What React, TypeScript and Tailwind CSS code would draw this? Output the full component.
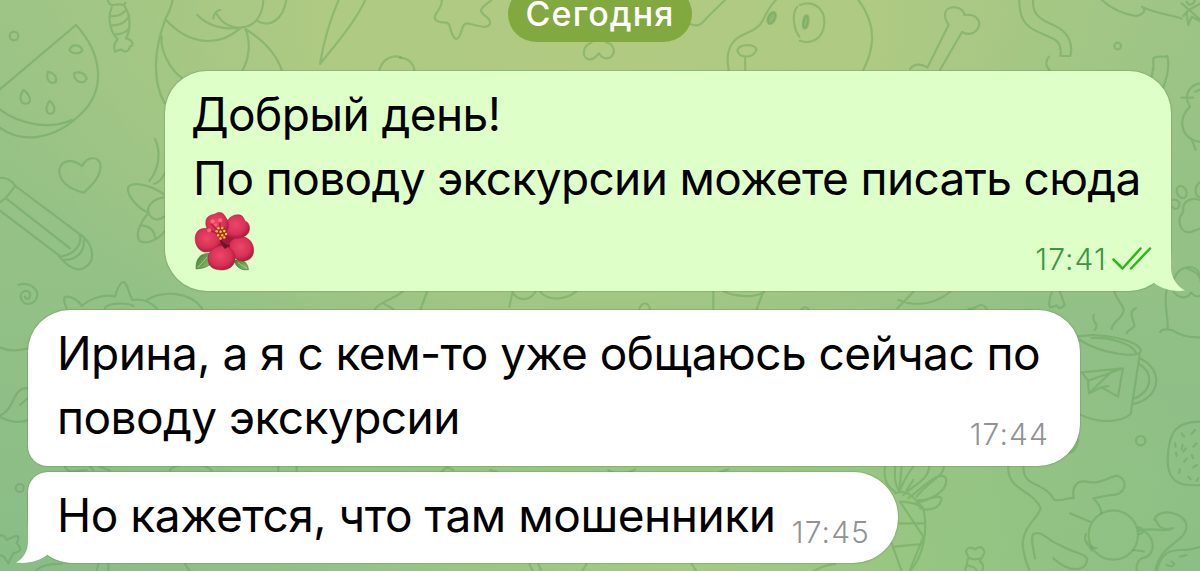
import type { ReactNode } from "react";

function Doodles({ x, y, children }: { x: number; y: number; children: ReactNode }) {
  return <g transform={`translate(${x} ${y}) scale(0.33333)`}>{children}</g>;
}

function Wallpaper() {
  return (
    <svg
      className="absolute inset-0 h-full w-full"
      viewBox="0 0 1200 571"
      fill="none"
      stroke="#5f9a55"
      strokeOpacity="0.4"
      strokeWidth="6.5"
      strokeLinecap="round"
      strokeLinejoin="round"
      aria-hidden="true"
    >
      <Doodles x={0} y={0}>
        <circle cx="42" cy="108" r="13" />
        <path d="M-5 272L228 75C310 165 316 270 245 340C160 425 60 430 -5 380M-5 325C60 375 150 390 215 360" />
        <path d="M208 150C215 130 240 133 247 150C240 165 215 161 208 150ZM144 215C160 218 172 230 168 245C155 255 135 243 144 215ZM222 220C240 213 257 220 260 237C250 255 222 247 222 220ZM70 270C85 278 95 298 87 308C65 318 52 298 70 270ZM149 302C160 312 168 325 160 338C143 350 130 330 149 302Z" />
        <path d="M323 0C330 20 335 15 349 14C365 10 375 20 376 8M335 22C322 55 330 95 353 118C340 130 342 145 345 155C358 150 364 145 371 153C380 157 388 150 390 140C403 138 400 120 378 115C395 85 390 40 373 18M333 48C350 50 365 45 378 30M332 76C355 78 375 70 388 48M345 104C365 102 382 96 388 82" />
        <path d="M519 -5C510 40 500 45 496 58C465 140 453 235 494 310M496 58C570 140 660 140 724 82C775 80 790 30 790 -5M724 82C705 85 670 78 650 42M640 55C642 40 650 32 660 30M592 45C620 75 670 92 724 82M770 62C810 85 850 60 860 -5M736 87C755 130 745 180 728 210M736 87C790 120 830 165 845 210M485 110C480 150 510 210 546 234" />
        <path d="M1018 -5C985 70 970 130 960 192C1010 130 1070 60 1098 -5M1138 210C1150 170 1185 165 1202 172" />
        <path d="M246 498C265 465 300 468 302 500C300 535 270 560 252 578C205 568 175 540 178 508C186 478 220 476 246 498Z" />
        <path d="M-5 535C15 530 35 540 46 558L236 700C250 715 238 760 182 770L-5 628M46 558C30 575 20 600 -5 608M18 595L210 745M236 700C290 735 290 800 235 809C210 805 190 785 178 770M251 720C255 755 230 780 190 780" />
        <path d="M465 417C485 460 475 510 448 543M494 520C485 540 475 548 462 552M490 582C460 560 400 540 384 562C380 590 420 630 446 638C425 660 405 700 417 720C430 735 470 725 493 695M446 638C455 665 480 660 492 650M490 592C450 600 440 625 446 638M420 676C445 675 465 690 465 715" />
        <path d="M56 855C80 845 112 860 112 885C108 920 64 920 62 890C64 865 95 870 90 888C88 900 76 898 75 890" />
        <path d="M200 925C190 905 190 890 200 890C220 890 238 905 245 918C270 895 315 880 345 890C355 855 363 845 372 846C385 855 388 890 398 900C430 895 450 905 470 925M440 900C490 870 570 875 606 925M315 925C320 910 380 905 400 918" />
      </Doodles>
      <Doodles x={400} y={0}>
        <path d="M125 0C130 25 95 45 106 58C120 75 140 60 148 75C153 95 158 115 170 117C188 112 180 70 202 70C230 75 260 90 270 72C275 50 240 45 243 30C250 15 270 5 275 0" />
        <path d="M0 173C25 175 40 190 43 210M575 127C545 140 545 175 568 178C585 180 590 165 597 160C606 175 620 178 632 172C650 155 640 130 618 127M870 72C900 85 910 65 922 52L980 -5" />
        <path d="M1132 -5C1120 10 1110 15 1090 58C1070 100 1030 95 1005 120C980 145 980 180 986 210M1012 152C1015 130 1070 130 1069 150C1060 175 1020 177 1012 152ZM1035 172L1036 210M1192 20C1175 40 1180 85 1198 110" />
        <ellipse cx="1115" cy="54" rx="11" ry="19" transform="rotate(25 1115 54)" fill="#5f9a55" fillOpacity=".4" />
      </Doodles>
      <Doodles x={800} y={0}>
        <path d="M0 15C40 0 75 25 73 70C70 115 35 135 0 122M175 0C240 85 215 160 190 210" />
        <ellipse cx="17" cy="66" rx="8" ry="20" transform="rotate(10 17 66)" fill="#5f9a55" fillOpacity=".4" />
        <path d="M330 208C340 190 365 190 382 203L446 74C425 45 435 20 466 22C485 25 492 35 493 45C530 40 545 65 534 85C520 105 500 105 486 96L420 210" />
        <path d="M658 -5C655 90 710 90 757 115C780 125 785 145 781 168L811 168C820 130 805 95 760 75C710 55 695 35 700 -5M747 170C735 185 738 200 748 210" />
        <path d="M900 -5C930 25 970 42 1008 48C1030 45 1040 30 1026 20C1060 40 1120 45 1145 56M1145 10L1202 60M1150 48C1170 20 1190 20 1202 10M1160 40L1165 75L1175 50L1202 64M1160 5C1165 20 1180 15 1185 0" />
        <circle cx="953" cy="138" r="10" />
        <path d="M1060 210V175C1075 163 1090 175 1102 168C1110 200 1100 235 1090 262M1055 230L1060 200M1202 250C1165 255 1150 290 1170 320C1135 350 1135 415 1202 426M1145 293H1180M1175 418L1187 450M1185 275L1202 268" />
        <ellipse cx="1145" cy="576" rx="14" ry="19" transform="rotate(-25 1145 576)" />
        <path d="M1118 600C1135 595 1145 613 1133 624C1125 630 1119 625 1118 620M1202 545C1180 560 1184 590 1202 592M1202 600C1170 590 1145 605 1150 635C1125 665 1145 705 1175 695L1202 685" />
        <path d="M1120 840C1140 790 1190 790 1202 830M1160 805C1185 815 1202 825 1202 845M1175 880C1190 895 1205 890 1210 875" />
      </Doodles>
      <Doodles x={900} y={280}>
        <path d="M40 36L-8 85M150 36C100 75 45 80 -5 60M205 87C235 88 240 60 260 86M455 38C445 60 448 78 450 82C465 80 470 70 476 84C485 85 490 80 494 75L480 36" />
        <path d="M643 30C645 60 680 80 668 100C660 120 638 125 635 147M582 105C570 125 602 130 584 150M708 85C680 95 705 125 703 138C695 150 680 150 680 160M800 30C790 70 805 110 803 146M780 157C785 145 800 148 815 150C850 170 870 173 902 172M820 35C840 60 865 55 872 38" />
        <path d="M530 170C600 155 710 180 723 210C725 240 600 220 540 180M575 174C640 172 700 195 708 220M719 225L692 402C660 430 590 430 540 403M722 236C785 265 790 350 700 372M716 252C760 275 760 330 705 355M545 277L669 265L654 350L604 322L567 340L564 302L669 265M564 302L547 279M567 340L640 270M604 322L625 318" />
        <circle cx="722" cy="482" r="14" />
        <path d="M535 480C530 505 520 520 500 520M902 425C830 425 805 450 803 545C805 600 830 620 902 615M845 460L852 470M885 450L875 462M825 490L827 500M890 490L880 500M848 495L845 508M858 505L850 515M828 518L830 528M875 525L880 535M860 535L853 545M890 555L880 562M840 568L838 578M865 590L872 598M895 595L890 602" />
        <path d="M325 560C320 630 400 630 422 685C410 720 370 740 368 790C370 830 380 850 390 875M370 560C370 625 430 600 463 660C490 665 505 650 521 655C515 620 530 600 560 605C600 615 625 590 652 587C690 600 675 650 630 645L580 655C595 670 605 685 603 700M510 700L570 725" />
        <circle cx="640" cy="765" r="74" />
        <path d="M558 762C550 780 560 805 590 804M560 785L575 812M405 835C400 800 390 775 400 762C430 750 445 785 480 795C520 820 560 820 562 840C555 875 510 880 460 835M714 742C730 745 740 755 717 763M717 752C775 740 790 760 820 745M700 810L732 814M720 745C775 775 765 830 725 835C710 845 708 860 710 875M763 720C770 685 855 690 860 740C855 790 780 790 765 875M768 720C775 745 795 750 815 745M902 800C850 820 830 800 800 820C780 835 775 855 770 875M800 855C820 865 830 850 815 845M840 830L860 825" />
      </Doodles>
      <Doodles x={860} y={460}>
        <path d="M75 20C70 55 80 80 105 95M118 95C100 65 105 40 105 20M125 20L118 95C130 65 140 45 160 20M208 20C205 60 160 75 130 105M140 90L160 60M252 20C250 50 210 60 170 110M145 115C180 90 240 25 258 55C265 95 210 120 168 128M175 120C200 125 235 100 245 115C240 145 210 155 180 145M105 100C140 85 160 110 190 145M120 125C145 125 170 130 190 145C205 210 190 290 150 333M120 125L190 230L182 250L150 330M118 190H190M105 260L185 252M95 250L125 333" />
        <path d="M325 290C310 270 325 255 345 268C365 250 380 275 370 285C365 295 360 300 360 305C375 315 370 325 365 333M325 290L320 315L315 333M330 295C340 300 350 298 358 296M320 315C340 320 350 325 350 333" />
      </Doodles>
      <Doodles x={200} y={285}>
        <path d="M525 72C540 50 585 40 608 20M550 55L580 72M682 18L662 72M928 65L938 20C950 50 990 50 1008 18M1020 20C1045 50 1100 45 1130 18M1318 72C1325 50 1345 50 1350 72M1540 18V72M1570 18C1600 35 1660 40 1692 22M1690 20L1670 72M1805 72C1810 65 1820 65 1825 72" />
      </Doodles>
      <Doodles x={0} y={280}>
        <path d="M-5 200C25 215 45 213 85 205M85 325C55 320 45 350 35 370C25 390 10 405 -5 407C30 430 65 428 85 420M60 375L82 355" />
        <circle cx="59" cy="624" r="12" />
        <path d="M-5 770C10 760 15 770 20 780L40 770C55 765 60 770 50 790C65 805 65 815 40 820L25 850L10 828L-5 825M105 875C120 855 160 850 185 852M325 852V875M290 875L295 852M555 852L570 875M195 560C205 585 230 570 260 570M280 570L270 560M300 560L330 572M510 572C520 545 620 545 635 572M835 560V572M890 560V572" />
      </Doodles>
      <Doodles x={400} y={440}>
        <path d="M125 96L140 80L160 90M270 90L290 96M625 90C640 104 690 100 705 88M960 96L985 88M388 372L400 395M415 372L425 395M545 395L560 372M875 372L890 395M1240 395C1260 380 1280 375 1305 372" />
      </Doodles>
    </svg>
  );
}

function Hibiscus() {
  return (
    <svg className="mt-px ml-px block h-[60px] w-[62px]" viewBox="45 35 180 174" role="img" aria-label="🌺">
      <defs>
        <radialGradient id="petal" cx="45%" cy="42%" r="62%">
          <stop offset="0" stopColor="#ea4869" />
          <stop offset=".65" stopColor="#d83055" />
          <stop offset="1" stopColor="#a5193a" />
        </radialGradient>
        <linearGradient id="leaf" x1="0" y1="0" x2="1" y2="1">
          <stop offset="0" stopColor="#3f7c32" />
          <stop offset="1" stopColor="#8fc36a" />
        </linearGradient>
      </defs>
      <g fill="url(#leaf)" stroke="#3f7533" strokeWidth="2">
        <path d="M51 203C50 175 62 158 89 158L92 190C78 200 65 202 51 203Z" />
        <path d="M162 180C175 170 200 178 203 205C185 208 168 200 162 180Z" />
        <path d="M55 200L84 168M172 184L199 202" fill="none" stroke="#b0d892" />
      </g>
      <path d="M100 90L150 85L175 120L165 170L110 160L90 120Z" fill="#a3193a" />
      <g fill="url(#petal)" stroke="#a91d3e" strokeWidth="1.5">
        <path d="M148 128C170 95 215 108 218 145C220 170 202 182 183 180C160 175 146 155 148 128Z" />
        <path d="M132 95C133 62 155 43 176 46C187 47 191 58 193 64C210 70 210 95 197 105C178 118 148 118 132 95Z" />
        <path d="M112 102C85 98 76 80 80 62C84 46 98 47 107 43C120 34 132 41 137 53C152 75 145 96 126 105Z" />
        <path d="M117 105C96 81 65 80 54 96C42 112 49 148 75 154C104 156 121 137 125 116Z" />
        <path d="M125 135C97 140 81 158 87 184C91 202 111 207 130 206C153 204 168 187 164 165C160 148 145 135 125 135Z" />
      </g>
      <path d="M120 111C128 125 130 130 150 134L135 145C126 136 120 124 120 111Z" fill="#6d1429" />
      <path d="M125 105L94 72M119 100L121 62M118 103L90 91" stroke="#bb193f" strokeWidth="4" />
      <g fill="#ff6a77">
        <circle cx="99" cy="65" r="6" />
        <circle cx="121" cy="62" r="6" />
        <circle cx="89" cy="91" r="6" />
        <circle cx="108" cy="75" r="4" />
      </g>
      <path d="M111 84L134 82L139 106L123 118L108 103Z" fill="#a33224" />
      <g fill="#f8c63d">
        <circle cx="116" cy="85" r="3.6" />
        <circle cx="127" cy="84" r="3.6" />
        <circle cx="111" cy="94" r="3.6" />
        <circle cx="122" cy="95" r="3.6" />
        <circle cx="133" cy="93" r="3.6" />
        <circle cx="138" cy="102" r="3.6" />
        <circle cx="115" cy="105" r="3.6" />
        <circle cx="127" cy="105" r="3.6" />
        <circle cx="122" cy="115" r="3.6" />
        <circle cx="133" cy="112" r="3.6" />
      </g>
    </svg>
  );
}

function Checks() {
  return (
    <svg className="h-6 w-10" viewBox="0 0 40 24" fill="none" stroke="#2fb51d" strokeWidth="2.5" strokeLinecap="round" strokeLinejoin="round">
      <path d="M1.5 12.5L10.5 21.5L28.5 1.5M19 21.5L38 1.5" />
    </svg>
  );
}

function Time({ children }: { children: string }) {
  return <span className="text-[30px] leading-[36px] font-[350] tracking-[1.1px] whitespace-nowrap">{children}</span>;
}

export default function App() {
  return (
    <main
      lang="ru"
      className="relative h-[571px] w-[1200px] overflow-hidden bg-[#94c385] bg-[radial-gradient(ellipse_620px_400px_at_600px_20px,#b1ca82_0%,#aeca83_45%,transparent_100%),radial-gradient(ellipse_600px_300px_at_680px_571px,#a0cc80_0%,transparent_100%),linear-gradient(180deg,#9cc486_0%,#94c186_45%,#89bd86_100%)] font-['Inter','Liberation_Sans',sans-serif] text-black"
    >
      <Wallpaper />
      <div className="relative flex flex-col">
        <div className="-mt-[14px] flex h-[56px] w-[184px] items-center justify-center self-center rounded-full bg-[#82a93f]">
          <span className="-mt-px text-[34px] leading-[40px] font-medium tracking-[1.1px] text-white">Сегодня</span>
        </div>

        <section className="relative mt-[29px] ml-[165px] flex h-[220px] w-[1006px] flex-col rounded-[42px] bg-[#dfffc9] pt-[11px] pl-[28px] shadow-[0_0_1px_1px_rgba(70,110,50,0.22)]">
          <p className="text-[46px] leading-[64px] whitespace-nowrap">
            <span className="-ml-[2px] block tracking-[-0.6px]">Добрый день!</span>
            <span className="block tracking-[-0.64px]">По поводу экскурсии можете писать сюда</span>
          </p>
          <div className="flex justify-between pr-[19px]">
            <Hibiscus />
            <div className="mt-[31px] flex h-9 items-center gap-[5px] text-[#399746]">
              <Time>17:41</Time>
              <Checks />
            </div>
          </div>
          <svg className="absolute -right-[14px] bottom-0 h-[42px] w-[46px]" viewBox="0 0 46 42">
            <path d="M15 34C23 40 34 43 46 41.5C38 37 33 30 32 20V0L8 20Z" fill="#dfffc9" />
          </svg>
        </section>

        <section className="mt-[19px] ml-[28px] flex h-[156px] w-[1052px] justify-between rounded-[42px] rounded-bl-[20px] bg-white pt-[11px] pr-[31px] pl-[29px] shadow-[0_0_1px_1px_rgba(70,110,50,0.22)]">
          <p className="text-[46px] leading-[64px] whitespace-nowrap">
            <span className="block tracking-[-0.55px]">Ирина, а я с кем-то уже общаюсь сейчас по</span>
            <span className="block tracking-[-0.55px]">поводу экскурсии</span>
          </p>
          <div className="-ml-[90px] flex items-end pb-[14px] text-[#929295]">
            <Time>17:44</Time>
          </div>
        </section>

        <section className="relative mt-[6px] ml-[28px] flex h-[91px] w-[870px] justify-between rounded-[45px] rounded-tl-[20px] bg-white pt-[11px] pr-[28px] pl-[29px] shadow-[0_0_1px_1px_rgba(70,110,50,0.22)]">
          <p className="text-[46px] leading-[64px] tracking-[-0.46px] whitespace-nowrap">Но кажется, что там мошенники</p>
          <div className="flex items-end pb-[13px] text-[#929295]">
            <Time>17:45</Time>
          </div>
          <svg className="absolute bottom-0 -left-[12px] h-[42px] w-[46px]" viewBox="0 0 46 42">
            <path d="M31 34C23 40 12 43 0 41.5C8 37 12 30 12 20V0L38 20Z" fill="#fff" />
          </svg>
        </section>
      </div>
    </main>
  );
}
